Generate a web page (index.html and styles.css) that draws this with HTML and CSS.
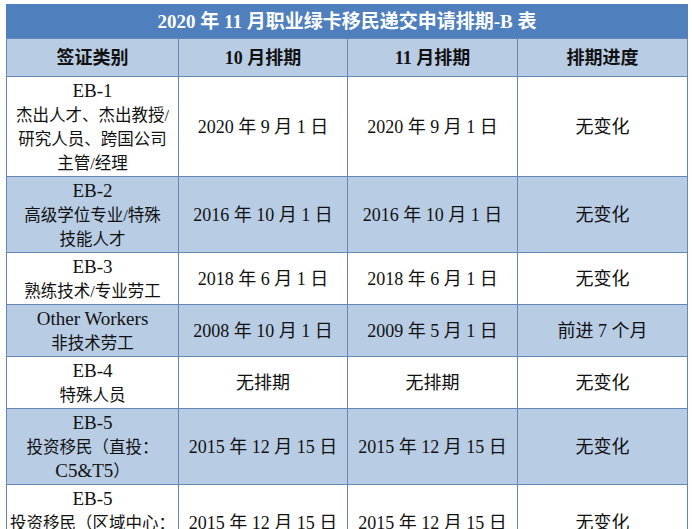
FILE: index.html
```html
<!DOCTYPE html>
<html lang="zh">
<head>
<meta charset="utf-8">
<link rel="stylesheet" href="styles.css">
</head>
<body>
<table class="sched">
  <colgroup>
    <col class="c1"><col class="c2"><col class="c3"><col class="c4">
  </colgroup>
  <tr class="title"><th colspan="4">2020 年 11 月职业绿卡移民递交申请排期-B 表</th></tr>
  <tr class="head"><th>签证类别</th><th>10 月排期</th><th>11 月排期</th><th>排期进度</th></tr>
  <tr>
    <td class="cat">EB-1<br><span class="zh">杰出人才、杰出教授/<br>研究人员、跨国公司<br>主管/经理</span></td>
    <td>2020 年 9 月 1 日</td><td>2020 年 9 月 1 日</td><td>无变化</td>
  </tr>
  <tr class="alt">
    <td class="cat">EB-2<br><span class="zh">高级学位专业/特殊<br>技能人才</span></td>
    <td>2016 年 10 月 1 日</td><td>2016 年 10 月 1 日</td><td>无变化</td>
  </tr>
  <tr>
    <td class="cat">EB-3<br><span class="zh">熟练技术/专业劳工</span></td>
    <td>2018 年 6 月 1 日</td><td>2018 年 6 月 1 日</td><td>无变化</td>
  </tr>
  <tr class="alt">
    <td class="cat">Other Workers<br><span class="zh">非技术劳工</span></td>
    <td>2008 年 10 月 1 日</td><td>2009 年 5 月 1 日</td><td>前进 7 个月</td>
  </tr>
  <tr>
    <td class="cat">EB-4<br><span class="zh">特殊人员</span></td>
    <td>无排期</td><td>无排期</td><td>无变化</td>
  </tr>
  <tr class="alt">
    <td class="cat">EB-5<br><span class="zh">投资移民（直投：</span><br>C5&amp;T5<span class="zh">）</span></td>
    <td>2015 年 12 月 15 日</td><td>2015 年 12 月 15 日</td><td>无变化</td>
  </tr>
  <tr>
    <td class="cat">EB-5<br><span class="zh">投资移民（区域中心：</span><br>I5&amp;R5<span class="zh">）</span></td>
    <td>2015 年 12 月 15 日</td><td>2015 年 12 月 15 日</td><td>无变化</td>
  </tr>
</table>
</body>
</html>
```

FILE: styles.css
```css
html, body {
  margin: 0;
  background: #ffffff;
}
body {
  padding: 4px 5px 0 6px;
  font-family: "Liberation Serif", "Noto Sans CJK SC", serif;
  color: #111111;
  overflow: hidden;
}
.sched {
  border-collapse: collapse;
  table-layout: fixed;
  width: 681px;
}
.c1 { width: 172px; }
.c2 { width: 169px; }
.c3 { width: 170px; }
.c4 { width: 170px; }
.sched th,
.sched td {
  border: 1px solid #6585b4;
  text-align: center;
  vertical-align: middle;
  padding: 2px 0 1px;
  font-size: 18px;
  line-height: 24px;
  font-weight: normal;
  white-space: nowrap;
}
.sched td.cat {
  font-size: 19px;
}
.zh {
  font-size: 16.5px;
  line-height: 16px;
}
.title th {
  background: #4f7fbd;
  color: #ffffff;
  font-weight: bold;
  font-size: 19px;
  height: 33px;
  padding: 0;
  border-color: #4f7fbd;
  border-bottom-color: #6585b4;
}
.head th {
  background: #b8cce4;
  font-weight: bold;
  font-size: 18px;
  height: 37px;
  padding: 0;
}
.alt td {
  background: #b8cce4;
}
```
